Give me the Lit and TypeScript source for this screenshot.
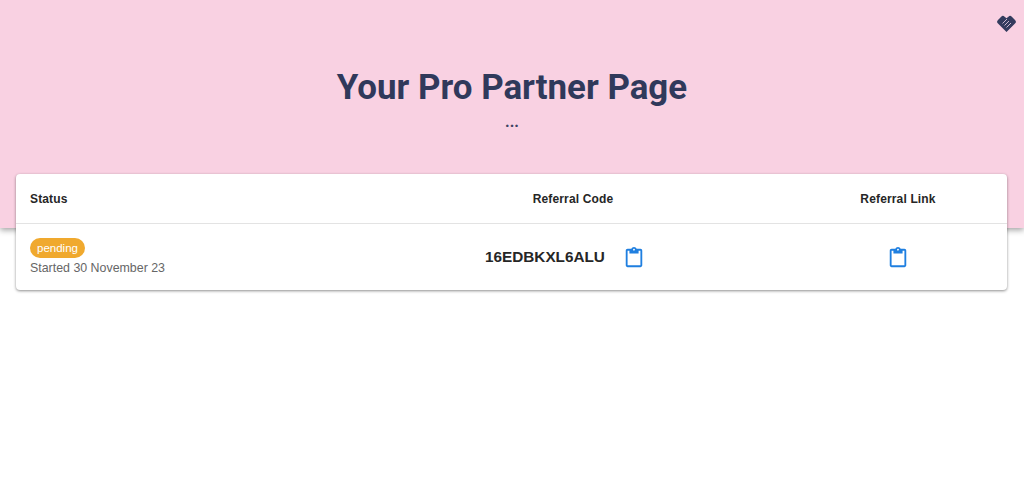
import { LitElement, html, css } from "lit";
import { customElement } from "lit/decorators.js";

const clip = html`<svg class="clip" viewBox="0 0 24 24" width="22" height="22">
  <path fill="currentColor" d="M19 2h-4.180C14.400.840 13.300 0 12 0S9.600.840 9.180 2H5c-1.100 0-2 .900-2 2v16c0 1.100.900 2 2 2h14c1.100 0 2-.900 2-2V4c0-1.100-.900-2-2-2zm-7 0c.550 0 1 .450 1 1s-.450 1-1 1-1-.450-1-1 .450-1 1-1zm7 18H5V4h2v3h10V4h2v16z"/>
</svg>`;

@customElement("app-root")
export class AppRoot extends LitElement {
  static styles = css`
    :host { display: block; min-height: 480px; background: #fff; font-family: "Liberation Sans", Arial, sans-serif; }
    .hero { position: relative; height: 228px; background: #f9d1e2; box-shadow: 0 2px 6px rgba(0,0,0,.38); display: flex; flex-direction: column; align-items: center; padding-top: 66px; box-sizing: border-box; }
    .logo { position: absolute; top: 15px; right: 8px; }
    h1 { margin: 0; font: 700 34.900px/44px Roboto, sans-serif; color: #30395b; }
    .dots { font: 700 16px/20px Roboto, sans-serif; color: #3c4463; margin-top: 2px; }
    .card { position: relative; margin: -54px 17px 0 16px; background: #fff; border-radius: 4px; box-shadow: 0 1px 3px rgba(0,0,0,.45); display: grid; grid-template-columns: 341px 432px 218px; }
    .th { height: 50px; box-sizing: border-box; padding-top: 1px; border-bottom: 1px solid #e3e3e3; display: flex; align-items: center; font-size: 12px; font-weight: 700; color: #262626; letter-spacing: .15px; }
    .td { height: 66px; display: flex; align-items: center; box-sizing: border-box; }
    .center { justify-content: center; }
    .first { padding-left: 14px; }
    .status { flex-direction: column; align-items: flex-start; justify-content: center; }
    .badge { background: #f0a92e; color: #fff; font-size: 11.500px; line-height: 20px; height: 20px; padding: 0 7px; border-radius: 10px; }
    .started { font-size: 12.400px; line-height: 18px; color: #666; margin-top: 1px; }
    .code-cell { padding-right: 16px; gap: 18px; }
    .code { font-size: 15.300px; font-weight: 700; color: #262626; margin-bottom: 1px; }
    .clip { color: #1f7fe0; display: block; margin-top: 2px; }
  `;

  render() {
    return html`
      <section class="hero">
        <svg class="logo" viewBox="0 0 19 17" width="19" height="17">
          <path d="M9.500 17 1 8.600a2.600 2.600 0 0 1 0-3.700L4.200 1.700a2.400 2.400 0 0 1 3.400 0L9.500 3.300l1.900-1.600a2.400 2.400 0 0 1 3.400 0L18 4.900a2.600 2.600 0 0 1 0 3.700z" fill="#343c5e"/>
          <path d="M5.500 8.500l4.500-4.500M7.500 10.500l4.500-4.500M9.500 12.500l4.500-4.500" stroke="#c9b7cf" stroke-width="1" fill="none"/>
        </svg>
        <h1>Your Pro Partner Page</h1>
        <div class="dots">...</div>
      </section>
      <section class="card">
        <div class="th first">Status</div>
        <div class="th center">Referral Code</div>
        <div class="th center">Referral Link</div>
        <div class="td first status">
          <span class="badge">pending</span>
          <span class="started">Started 30 November 23</span>
        </div>
        <div class="td center code-cell"><span class="code">16EDBKXL6ALU</span>${clip}</div>
        <div class="td center">${clip}</div>
      </section>
    `;
  }
}
